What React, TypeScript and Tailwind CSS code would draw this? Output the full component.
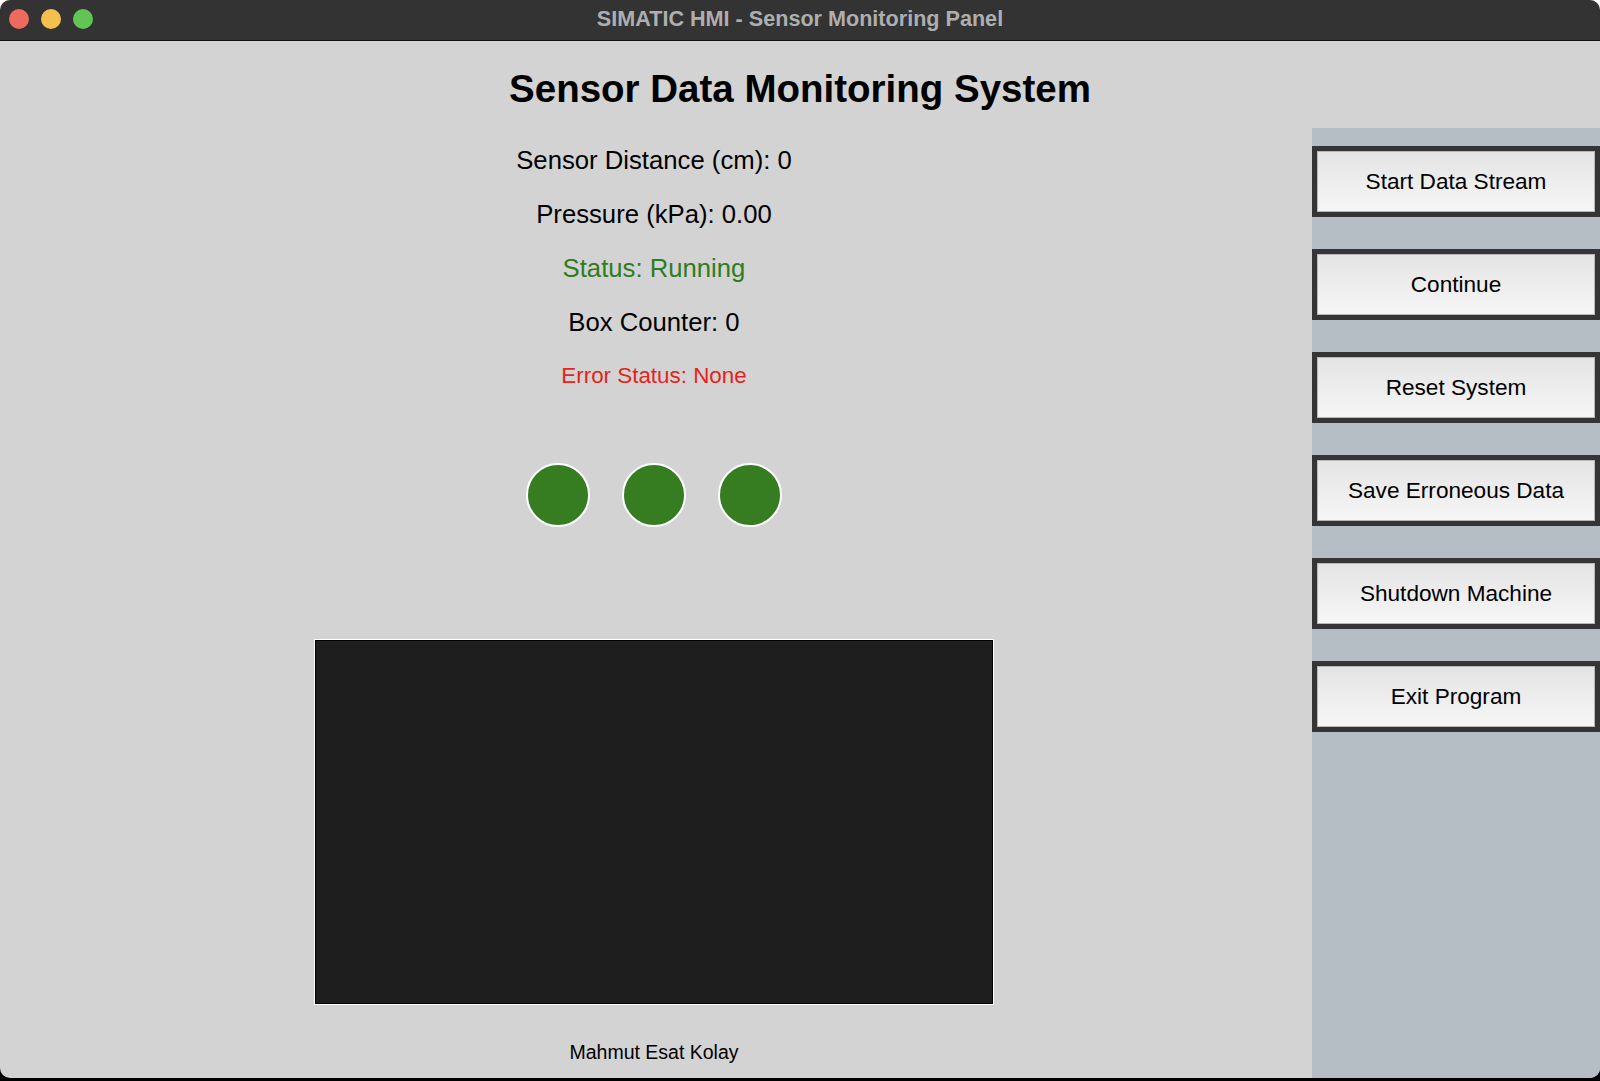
// SIMATIC HMI - Sensor Monitoring Panel
// Fenêtre macOS avec panneau de contrôle à droite

const buttons = [
    'Start Data Stream',
    'Continue',
    'Reset System',
    'Save Erroneous Data',
    'Shutdown Machine',
    'Exit Program',
];

const readings = [
    { label: 'Sensor Distance (cm): 0', cls: 'text-black text-[25.7px]' },
    { label: 'Pressure (kPa): 0.00', cls: 'text-black text-[25.7px]' },
    { label: 'Status: Running', cls: 'text-[#2f7d1f] text-[25.7px]' },
    { label: 'Box Counter: 0', cls: 'text-black text-[25.7px]' },
    { label: 'Error Status: None', cls: 'text-[#e3241b] text-[22.4px]' },
];

const HmiButton = ({ label }: { label: string }) => (
    <button className="w-full h-[71px] border-[5px] border-[#353535] bg-[#353535] block">
        <div className="w-full h-full border border-[#b8b8b8] bg-gradient-to-b from-[#e4e4e4] to-[#f6f6f6] flex items-center justify-center text-[22.6px] text-black">
            {label}
        </div>
    </button>
);

export default function App() {
    return (
        <div
            className="w-[1600px] h-[1081px] bg-[linear-gradient(to_bottom,#ffffff_50%,#000000_50%)]"
            style={{ fontFamily: '"Liberation Sans", Arial, sans-serif' }}
        >
            <div className="w-full h-[1078px] rounded-[10px] overflow-hidden flex flex-col bg-[#d3d3d3]">
                {/* Title bar */}
                <div className="h-[41px] shrink-0 bg-[#333333] border-b border-[#111] relative flex items-center justify-center pb-[2px]">
                    <div className="absolute left-[9px] top-[9px] flex gap-[12px]">
                        <span className="w-[20px] h-[20px] rounded-full bg-[#ee6a5f]" />
                        <span className="w-[20px] h-[20px] rounded-full bg-[#f5bf4f]" />
                        <span className="w-[20px] h-[20px] rounded-full bg-[#61c554]" />
                    </div>
                    <span className="text-[21.6px] font-bold text-[#aeaeae]">SIMATIC HMI - Sensor Monitoring Panel</span>
                </div>

                {/* Header */}
                <div className="h-[87px] shrink-0 flex items-center justify-center pt-[8px]">
                    <h1 className="text-[38.5px] font-bold text-black">Sensor Data Monitoring System</h1>
                </div>

                <div className="flex-1 flex min-h-0">
                    {/* Left column */}
                    <div className="flex-1 flex flex-col items-center pt-[5px] pr-[4px]">
                        {readings.map((r) => (
                            <p key={r.label} className={`h-[54px] leading-[54px] ${r.cls}`}>
                                {r.label}
                            </p>
                        ))}

                        <div className="flex gap-[32px] mt-[60px]">
                            {[0, 1, 2].map((i) => (
                                <span key={i} className="w-[64px] h-[64px] rounded-full bg-[#367d22] border-2 border-white" />
                            ))}
                        </div>

                        <div className="mt-[112px] w-[680px] h-[366px] border border-white bg-[#1e1e1e] shadow-[inset_0_0_0_1px_#000]" />

                        <div className="mt-[33px] text-[19.5px] text-black">Mahmut Esat Kolay</div>
                    </div>

                    {/* Right panel */}
                    <div className="w-[288px] shrink-0 bg-[#b4bec4] pt-[18px] flex flex-col gap-[32px]">
                        {buttons.map((b) => (
                            <HmiButton key={b} label={b} />
                        ))}
                    </div>
                </div>
            </div>
        </div>
    );
}
